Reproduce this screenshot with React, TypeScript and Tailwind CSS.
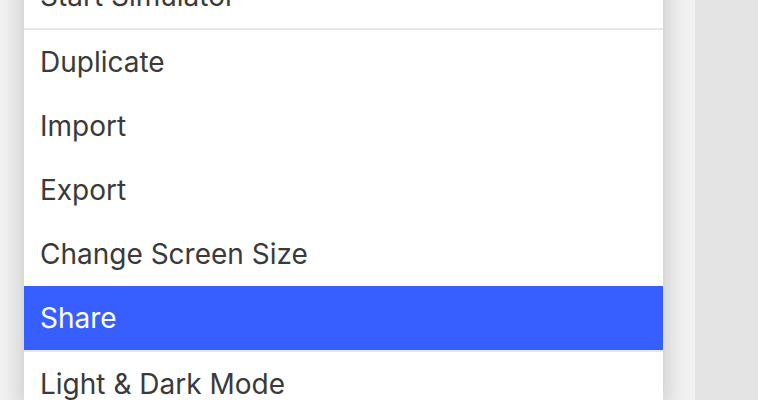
import React from "react";

type MenuItem = {
  label: string;
  active?: boolean;
  dividerAfter?: boolean;
};

const items: MenuItem[] = [
  { label: "Start Simulator", dividerAfter: true },
  { label: "Duplicate" },
  { label: "Import" },
  { label: "Export" },
  { label: "Change Screen Size" },
  { label: "Share", active: true, dividerAfter: true },
  { label: "Light & Dark Mode" },
];

const App: React.FC = () => {
  return (
    <div
      className="flex h-[400px] w-[758px] overflow-hidden bg-[#e4e4e4]"
      style={{ fontFamily: "Inter, 'Noto Sans', sans-serif" }}
    >
      <div className="w-[695px] shrink-0 overflow-hidden bg-[#f3f3f3] pl-[24px]">
        <div className="-mt-[36px] w-[639px] bg-white shadow-[0_0_28px_rgba(0,0,0,0.22)]">
          {items.map((item) => (
            <div key={item.label}>
              <div
                className={
                  item.active
                    ? "flex h-[64px] items-center bg-[#375fff] px-[16px] pb-[1px] text-[28px] text-white"
                    : "flex h-[64px] items-center px-[16px] pb-[1px] text-[28px] text-[#3a3a3a]"
                }
              >
                {item.label}
              </div>
              {item.dividerAfter && <div className="h-[2px] bg-[#e8e8e8]" />}
            </div>
          ))}
        </div>
      </div>
      <div className="flex-1" />
    </div>
  );
};

export default App;
